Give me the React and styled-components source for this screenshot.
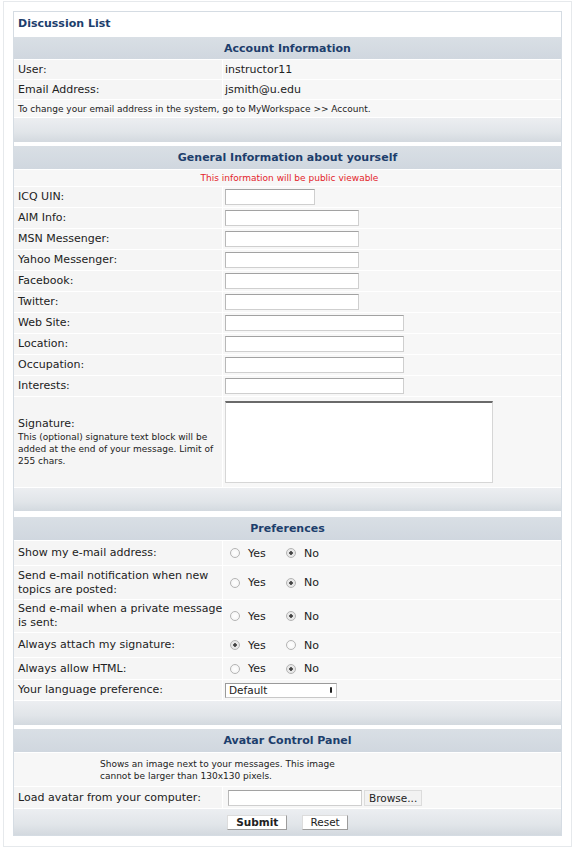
import React from 'react';
import styled, { createGlobalStyle } from 'styled-components';

const Global = createGlobalStyle`
  body {
    margin: 0;
    background: #fff;
    font-family: "DejaVu Sans", Verdana, sans-serif;
    font-size: 11px;
    color: #222;
  }
`;

const Frame = styled.div`
  width: 549px;
  margin: 1px 3px 0 3px;
  padding: 9px 9px 10px 9px;
  border: 1px solid #e6e9ec;
`;

const Table = styled.div`
  display: flex;
  flex-direction: column;
  gap: 1px;
  border: 1px solid #d5dce3;
  background: #fff;
`;

const Title = styled.div`
  height: 24px;
  line-height: 24px;
  padding-left: 4px;
  font-weight: bold;
  color: #1d3e6c;
`;

const Header = styled.div`
  height: ${p => p.$h || 23}px;
  display: flex;
  align-items: center;
  justify-content: center;
  font-weight: bold;
  color: #1d3e6c;
  background: linear-gradient(#d9dfe5, #d0d7df);
`;

const Bar = styled.div`
  height: ${p => p.$h || 24}px;
  margin-bottom: ${p => p.$gap || 0}px;
  display: flex;
  align-items: center;
  justify-content: center;
  gap: 15px;
  background: linear-gradient(#eceef1, #e1e5e9 60%, #d3d9df);
`;

const Row = styled.div`
  display: grid;
  grid-template-columns: 208px 1fr;
  gap: 1px;
  min-height: ${p => p.$h || 20}px;
`;

const Label = styled.div`
  display: flex;
  align-items: center;
  padding-left: 4px;
  background: #f5f5f5;
  line-height: 14px;
  white-space: pre;
`;

const Value = styled.div`
  display: flex;
  align-items: center;
  padding-left: ${p => p.$pad ?? 2}px;
  background: #f7f7f7;
`;

const Wide = styled.div`
  min-height: ${p => p.$h || 17}px;
  display: flex;
  align-items: center;
  justify-content: ${p => p.$center ? 'center' : 'flex-start'};
  padding-left: ${p => p.$pl || 4}px;
  background: #f7f7f7;
  font-size: 9px;
  line-height: 12px;
  color: ${p => p.$red ? '#e3242b' : '#222'};
`;

const Note = styled.div`
  width: 250px;
`;

const SigLabel = styled.div`
  font-size: 11px;
  line-height: 14px;
  white-space: normal;
  small {
    display: block;
    font-size: 9px;
    line-height: 12px;
    width: 200px;
  }
`;

const Input = styled.div`
  width: ${p => p.$w}px;
  height: 16px;
  box-sizing: border-box;
  background: #fff;
  border: 1px solid #cfcfcf;
  border-top-color: #a2a2a2;
  border-left-color: #b8b8b8;
`;

const TextArea = styled.div`
  width: 268px;
  height: 82px;
  box-sizing: border-box;
  background: #fff;
  border: 1px solid #d6d6d6;
  border-top: 2px solid #6a6a6a;
`;

const Radios = styled.div`
  display: flex;
  align-items: center;
  padding-left: 5px;
`;

const Opt = styled.span`
  display: inline-flex;
  align-items: center;
  gap: 8px;
  width: 56px;
`;

const Dot = styled.span`
  width: 10px;
  height: 10px;
  box-sizing: border-box;
  border-radius: 50%;
  border: 1px solid #b4b4b4;
  background: radial-gradient(circle, ${p => p.$on ? '#444 0 1.5px, #e8e8e8 2px' : '#fff 0, #f2f2f2 100%'});
`;

const Select = styled.div`
  width: 112px;
  height: 15px;
  box-sizing: border-box;
  display: flex;
  align-items: center;
  justify-content: space-between;
  padding: 0 4px 0 3px;
  background: #fff;
  border: 1px solid #9a9a9a;
  border-right-color: #c8c8c8;
  border-bottom-color: #c8c8c8;
  font-size: 10.5px;
`;

const Arrow = styled.span`
  width: 2px;
  height: 6px;
  background: #222;
  border-radius: 1px;
`;

const Button = styled.span`
  height: ${p => p.$h || 15}px;
  margin-left: ${p => p.$ml || 0}px;
  box-sizing: border-box;
  padding: 0 ${p => p.$px || 9}px;
  display: inline-flex;
  align-items: center;
  background: ${p => p.$gray ? '#f2f2f2' : '#fff'};
  border: 1px solid #dcdcdc;
  border-right-color: ${p => p.$gray ? '#dcdcdc' : '#9c9c9c'};
  border-bottom-color: ${p => p.$gray ? '#dcdcdc' : '#9c9c9c'};
  font-size: 10.5px;
  font-weight: ${p => p.$bold ? 'bold' : 'normal'};
  color: #222;
`;

const inputs = [
  ['ICQ UIN:', 90],
  ['AIM Info:', 134],
  ['MSN Messenger:', 134],
  ['Yahoo Messenger:', 134],
  ['Facebook:', 134],
  ['Twitter:', 134],
  ['Web Site:', 179],
  ['Location:', 179],
  ['Occupation:', 179],
  ['Interests:', 179],
];

const prefs = [
  ['Show my e-mail address:', false, 24],
  ['Send e-mail notification when new\ntopics are posted:', false, 33],
  ['Send e-mail when a private message\nis sent:', false, 32],
  ['Always attach my signature:', true, 24],
  ['Always allow HTML:', false, 21],
];

function YesNo({ yes }) {
  return (
    <Radios>
      <Opt><Dot $on={yes} />Yes</Opt>
      <Opt><Dot $on={!yes} />No</Opt>
    </Radios>
  );
}

export default function App() {
  return (
    <>
      <Global />
      <Frame>
        <Table>
          <Title>Discussion List</Title>
          <Header $h={22}>Account Information</Header>
          <Row $h={19}><Label>User:</Label><Value>instructor11</Value></Row>
          <Row $h={19}><Label>Email Address:</Label><Value>jsmith@u.edu</Value></Row>
          <Wide>To change your email address in the system, go to MyWorkspace &gt;&gt; Account.</Wide>
          <Bar $gap={3} />

          <Header>General Information about yourself</Header>
          <Wide $h={16} $center $red>This information will be public viewable</Wide>
          {inputs.map(([label, w]) => (
            <Row key={label}>
              <Label>{label}</Label>
              <Value><Input $w={w} /></Value>
            </Row>
          ))}
          <Row $h={90}>
            <Label>
              <SigLabel>
                Signature:
                <small>This (optional) signature text block will be added at the end of your message. Limit of 255 chars.</small>
              </SigLabel>
            </Label>
            <Value><TextArea /></Value>
          </Row>
          <Bar $h={23} $gap={5} />

          <Header>Preferences</Header>
          {prefs.map(([label, yes, h]) => (
            <Row key={label} $h={h}>
              <Label>{label}</Label>
              <Value><YesNo yes={yes} /></Value>
            </Row>
          ))}
          <Row>
            <Label>Your language preference:</Label>
            <Value><Select>Default<Arrow /></Select></Value>
          </Row>
          <Bar $gap={3} />

          <Header>Avatar Control Panel</Header>
          <Wide $h={33} $pl={86}>
            <Note>Shows an image next to your messages. This image cannot be larger than 130x130 pixels.</Note>
          </Wide>
          <Row $h={21}>
            <Label>Load avatar from your computer:</Label>
            <Value $pad={5}>
              <Input $w={134} />
              <Button $gray $px={4} $ml={2} $h={16}>Browse...</Button>
            </Value>
          </Row>
          <Bar $h={26}>
            <Button $bold $px={8}>Submit</Button>
            <Button $px={7}>Reset</Button>
          </Bar>
        </Table>
      </Frame>
    </>
  );
}
